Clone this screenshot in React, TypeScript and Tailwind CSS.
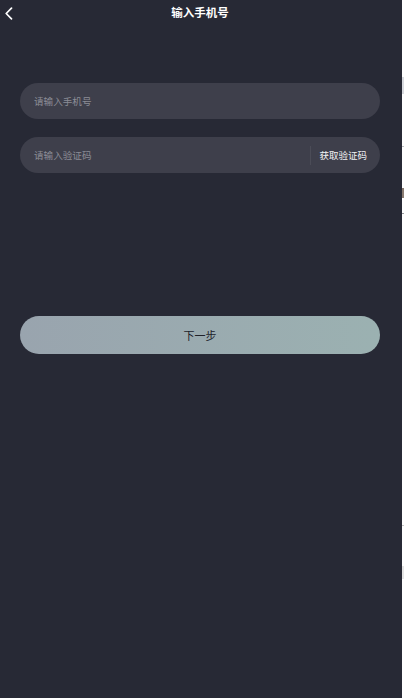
import React from "react";

export default function App() {
  const font = { fontFamily: '"Noto Sans CJK SC", "Noto Sans", sans-serif' };
  return (
    <div className="flex h-[698px] w-[404px] bg-white" style={font}>
      <div className="flex h-full w-[402px] flex-col bg-[#272935]">
        <div className="relative flex h-[26px] w-[400px] items-center justify-center">
          <svg
            className="absolute left-[4px] top-[7px]"
            width="10"
            height="13"
            viewBox="0 0 10 13"
            fill="none"
          >
            <path d="M7.5 1.2 L2.2 6.5 L7.5 11.8" stroke="#ffffff" strokeWidth="1.7" strokeLinecap="round" strokeLinejoin="round" />
          </svg>
          <span className="text-[11.5px] font-bold leading-none text-white">输入手机号</span>
        </div>
        <div className="flex w-[400px] flex-col px-5 pt-[57px]">
          <div className="flex h-9 items-center rounded-full bg-[#3e3f4b] pl-[14px]">
            <span className="text-[9.6px] text-[#8c8d96]">请输入手机号</span>
          </div>
          <div className="mt-[18px] flex h-9 items-center rounded-full bg-[#3e3f4b] pl-[14px] pr-[13px]">
            <span className="flex-1 text-[9.6px] text-[#8c8d96]">请输入验证码</span>
            <div className="mr-[8px] h-[19px] w-px bg-[#4b4c57]" />
            <span className="text-[9.5px] text-[#f2f2f4]">获取验证码</span>
          </div>
          <div className="mt-[143px] flex h-[38px] items-center justify-center rounded-full bg-gradient-to-r from-[#99a4ae] to-[#9bb1b1]">
            <span className="text-[11px] text-[#20222a]">下一步</span>
          </div>
        </div>
      </div>
      <div className="flex h-full w-[2px] flex-col">
        <div className="h-[77px]" />
        <div className="h-[17px] bg-[#d9dbe0]" />
        <div className="h-[52px]" />
        <div className="h-px bg-[#c0c2c6]" />
        <div className="h-[41px]" />
        <div className="h-[10px] bg-[#8a7c72]" />
        <div className="h-[15px]" />
        <div className="h-px bg-[#9a9ca0]" />
        <div className="h-[311px]" />
        <div className="h-px bg-[#c8c8c8]" />
        <div className="h-[40px]" />
        <div className="h-[13px] bg-[#e6e6e6]" />
      </div>
    </div>
  );
}
